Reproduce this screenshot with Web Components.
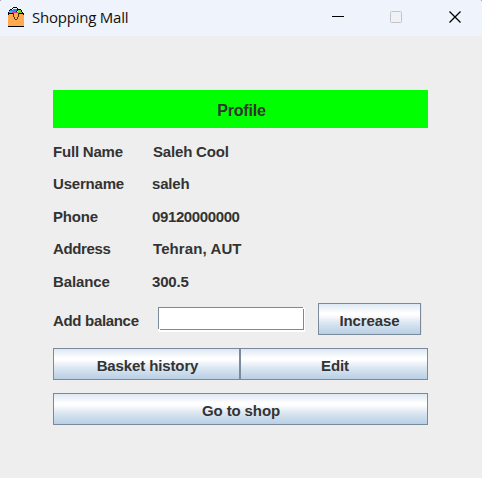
<!DOCTYPE html>
<html lang="en">
<head>
<meta charset="utf-8">
<title>Shopping Mall</title>
<style>
html, body { margin: 0; width: 482px; height: 478px; overflow: hidden; background: #555; }
</style>
</head>
<body>
<shop-window></shop-window>
<script>
const define = (name, html) => {
  const template = document.createElement('template');
  template.innerHTML = html;
  customElements.define(name, class extends HTMLElement {
    constructor() {
      super();
      this.attachShadow({ mode: 'open' }).append(template.content.cloneNode(true));
    }
  });
};

define('bag-icon', `
<style>:host{display:block;width:18px;height:21px} svg{display:block}</style>
<svg width="18" height="21" viewBox="0 0 18 21" shape-rendering="crispEdges">
  <path fill="#248ae8" d="M3 3h3v-1h4v4h-7z"/>
  <path fill="#30b9f0" d="M2 4h3v2h-3z"/>
  <path fill="#e83e78" d="M5 5h6v2h-6z"/>
  <path fill="#7bd51b" d="M11 3h3v1h1v2h-4z"/>
  <path fill="#000" d="M6 0h4v1h-4zM5 1h1v1h-1zM10 1h1v3h-1zM3 2h2v1h-2zM2 3h1v1h-1zM11 2h3v1h-3zM14 3h1v2h-1zM9 4h1v1h-1zM15 5h1v1h-1zM1 5h1v1h-1z"/>
  <path fill="#ffab4d" d="M1 6h16v13h-16z"/>
  <path fill="#000" d="M1 6h5v1h-5zM12 6h5v1h-5zM1 7h1v1h-1zM16 7h1v1h-1zM1 19h16v1h-16z"/>
  <path fill="#4a2e12" d="M6 6h1v4h-1zM11 6h1v4h-1zM7 10h1v2h-1zM10 10h1v2h-1zM8 12h2v1h-2z"/>
</svg>`);

define('title-bar', `
<style>
:host{display:flex;height:36px;box-sizing:border-box;padding-left:7px;background:#eff3fb;color:#111;font:15px/20px "Open Sans","Noto Sans",sans-serif}
bag-icon{margin-top:7px}
.title{margin:7px 0 0 7px;flex:1;white-space:nowrap;letter-spacing:-.22px}
.controls{display:grid;grid-template-columns:58px 59px 56px;height:36px}
svg{display:block}
</style>
<bag-icon></bag-icon><div class="title"><slot></slot></div>
<div class="controls">
  <svg width="58" height="36"><path d="M23 16.5h12" stroke="#000"/></svg>
  <svg width="59" height="36"><rect x="23.5" y="11.5" width="11" height="11" rx="1" fill="#eff1f5" stroke="#c1c4ca"/></svg>
  <svg width="56" height="36"><path d="M23.5 11.5l11 11M34.5 11.5l-11 11" fill="none" stroke="#000" stroke-width="1.3"/></svg>
</div>`);

define('profile-banner', `
<style>:host{display:block;box-sizing:border-box;height:38px;padding:1px 0 0 2px;background:#0f0;text-align:center;font-size:16px;line-height:40px;letter-spacing:-.15px}</style><slot></slot>`);

define('profile-field', `
<style>
:host{display:grid;grid-template-columns:99px 1fr;line-height:17px;white-space:nowrap}
.label{letter-spacing:var(--label-track,-.2px)}
.value{padding-left:var(--inset,0);letter-spacing:var(--value-track,-.2px)}
</style>
<div class="label"><slot name="label"></slot></div><div class="value"><slot></slot></div>`);

/* Sunken field: the outline leaves its top-right and bottom-left corner pixels open. */
define('metal-input', `
<style>
:host{display:block;width:148px;height:25px}
input{display:block;box-sizing:border-box;width:146px;height:23px;margin:0;padding:3px;border:0;border-radius:0;outline:0;
background:
 linear-gradient(#7a8a99,#7a8a99) 0 0/145px 1px no-repeat,
 linear-gradient(#7a8a99,#7a8a99) 0 0/1px 22px no-repeat,
 linear-gradient(#7a8a99,#7a8a99) 2px 22px/144px 1px no-repeat,
 linear-gradient(#7a8a99,#7a8a99) 145px 2px/1px 21px no-repeat,
 #fff;
box-shadow:1px 1px #fff,1px 2px #fff,0 2px #fff;font:inherit;color:inherit}
</style>
<input type="text" aria-label="Add balance">`);

define('metal-button', `
<style>
:host{display:block;height:32px}
button{display:block;box-sizing:border-box;width:100%;height:32px;margin:0;padding:3px 0 0;border:1px solid #7a8a99;border-radius:0;background:linear-gradient(#dde8f3 0%,#fff 30%,#fff 36%,#dce7f2 62%,#b8cfe5 100%);font:inherit;line-height:17px;letter-spacing:inherit;color:inherit}
button{padding-left:var(--shift,0)}
</style>
<button><slot></slot></button>`);

define('shop-window', `
<style>
:host{display:block;width:482px;height:478px;overflow:hidden;border-radius:2px 2px 0 0;background:#eee;color:#333;font:bold 15px "Liberation Sans",Arial,sans-serif;letter-spacing:-.12px}
main{padding:54px 54px 0 53px}
.fields{display:grid;grid-template-rows:32px 33px 32px 33px 17px;padding-top:15px}
.balance{display:flex;margin-top:13px;height:32px}
.balance label{width:105px;line-height:17px;padding-top:9px;letter-spacing:-.32px}
.balance metal-input{margin-top:4px}
.balance metal-button{margin-left:12px;width:103px;box-shadow:1px 0 #dce4ed}
.actions{display:grid;grid-template-columns:187px 188px;margin-top:13px}
.actions metal-button{--shift:2px}
.shop{margin-top:13px;--shift:1px}
</style>
<title-bar>Shopping Mall</title-bar>
<main>
  <profile-banner>Profile</profile-banner>
  <div class="fields">
    <profile-field style="--inset:1px;--value-track:-.18px"><span slot="label">Full Name</span>Saleh Cool</profile-field>
    <profile-field><span slot="label">Username</span>saleh</profile-field>
    <profile-field style="--value-track:-.38px"><span slot="label">Phone</span>09120000000</profile-field>
    <profile-field style="--inset:1px;--value-track:.1px;--label-track:-.36px"><span slot="label">Address</span>Tehran, AUT</profile-field>
    <profile-field style="--label-track:-.12px"><span slot="label">Balance</span>300.5</profile-field>
  </div>
  <div class="balance"><label>Add balance</label><metal-input></metal-input><metal-button>Increase</metal-button></div>
  <div class="actions"><metal-button>Basket history</metal-button><metal-button>Edit</metal-button></div>
  <metal-button class="shop">Go to shop</metal-button>
</main>`);
</script>
</body>
</html>
